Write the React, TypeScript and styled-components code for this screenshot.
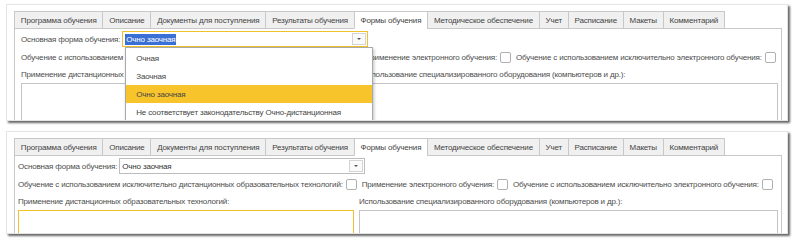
import React from 'react';
import styled, { createGlobalStyle } from 'styled-components';

const Global = createGlobalStyle`
  html, body { margin: 0; padding: 0; background: #ffffff; }
  body { font-family: Arial, "Liberation Sans", sans-serif; }
  * { box-sizing: border-box; }
`;

const Page = styled.div`
  width: 800px;
  height: 241px;
  overflow: hidden;
  display: flex;
  flex-direction: column;
  gap: 10px;
  padding: 4px 0 0 6px;
`;

const Card = styled.div<{ $h: number }>`
  width: 782px;
  height: ${(p) => p.$h}px;
  background: #fff;
  border: 1px solid #e4e4e4;
  box-shadow: 2px 2px 2px rgba(0, 0, 0, 0.6);
  padding: 6px 5px 0 7px;
  overflow: hidden;
  position: relative;
  font-size: 8px;
  letter-spacing: -0.17px;
  color: #4a4a4a;
`;

const TabBar = styled.div`
  display: flex;
  height: 18px;
  position: relative;
  z-index: 1;
`;

const Tab = styled.div<{ $active?: boolean }>`
  display: flex;
  align-items: center;
  padding: 0 5.8px;
  height: 18px;
  border: 1px solid #c8c8c8;
  border-right: none;
  background: ${(p) => (p.$active ? '#ffffff' : '#f0f0f0')};
  border-bottom-color: ${(p) => (p.$active ? '#ffffff' : '#c8c8c8')};
  color: #444;
  white-space: nowrap;
  &:last-child { border-right: 1px solid #c8c8c8; }
`;

const Pane = styled.div<{ $pad: number }>`
  margin-top: -1px;
  border: 1px solid #c8c8c8;
  padding: 1px 3px 0 ${(p) => p.$pad}px;
  height: 200px;
  display: flex;
  flex-direction: column;
`;

const Row = styled.div<{ $h: number }>`
  display: flex;
  align-items: center;
  height: ${(p) => p.$h}px;
  white-space: nowrap;
`;

const Label = styled.span`
  color: #4d4d4d;
`;

const ComboWrap = styled.div`
  position: relative;
  margin-left: 2px;
`;

const Combo = styled.div<{ $focus?: boolean }>`
  width: 246px;
  height: 16px;
  display: flex;
  border: 1px solid ${(p) => (p.$focus ? '#f0c12c' : '#bdbdbd')};
  background: #fff;
`;

const ComboText = styled.div`
  flex: 1;
  display: flex;
  align-items: center;
  padding-left: 2px;
  color: #333;
`;

const Selected = styled.span`
  background: #3a6fd6;
  color: #fff;
  padding: 1px 1px;
`;

const DropBtn = styled.div`
  width: 14px;
  border: 1px solid #d4d4d4;
  display: flex;
  align-items: center;
  justify-content: center;
  margin: 1px;
  background: #fafafa;
`;

const Arrow = styled.div`
  width: 0;
  height: 0;
  border-left: 2px solid transparent;
  border-right: 2px solid transparent;
  border-top: 2px solid #555;
`;

const Popup = styled.div`
  position: absolute;
  left: 3px;
  top: 16px;
  width: 248px;
  background: #fff;
  border: 1px solid #a9a9a9;
  box-shadow: 1px 2px 3px rgba(0, 0, 0, 0.25);
  padding-top: 1px;
  z-index: 5;
`;

const Item = styled.div<{ $hl?: boolean }>`
  height: 18px;
  display: flex;
  align-items: center;
  padding-left: 10px;
  background: ${(p) => (p.$hl ? '#f8c42c' : 'transparent')};
  color: #444;
  white-space: nowrap;
`;

const CheckItem = styled.div`
  display: flex;
  align-items: center;
  margin-right: 5px;
`;

const Check = styled.span`
  display: inline-block;
  width: 11px;
  height: 11px;
  border: 1px solid #b0b0b0;
  border-radius: 2px;
  background: #fff;
  margin-left: 3px;
`;

const Columns = styled.div`
  display: flex;
  gap: 5px;
  flex: 1;
`;

const Column = styled.div<{ $w?: number }>`
  display: flex;
  flex-direction: column;
  ${(p) => (p.$w ? `width: ${p.$w}px;` : 'flex: 1;')}
`;

const ColLabel = styled.div`
  height: 14px;
  display: flex;
  align-items: center;
  color: #4d4d4d;
  white-space: nowrap;
`;

const TextBox = styled.div<{ $focus?: boolean }>`
  margin-top: 2px;
  height: 60px;
  border: 1px solid ${(p) => (p.$focus ? '#f0c12c' : '#c4c4c4')};
  background: #fff;
`;

const tabs = [
  'Программа обучения',
  'Описание',
  'Документы для поступления',
  'Результаты обучения',
  'Формы обучения',
  'Методическое обеспечение',
  'Учет',
  'Расписание',
  'Макеты',
  'Комментарий',
];

const options = [
  'Очная',
  'Заочная',
  'Очно заочная',
  'Не соответствует законодательству Очно-дистанционная',
];

function Form({ open }: { open: boolean }) {
  return (
    <>
      <TabBar>
        {tabs.map((t) => (
          <Tab key={t} $active={t === 'Формы обучения'}>
            {t}
          </Tab>
        ))}
      </TabBar>
      <Pane $pad={open ? 6 : 3}>
        <Row $h={18}>
          <Label>Основная форма обучения:</Label>
          <ComboWrap>
            <Combo $focus={open}>
              <ComboText>
                {open ? <Selected>Очно заочная</Selected> : 'Очно заочная'}
              </ComboText>
              <DropBtn>
                <Arrow />
              </DropBtn>
            </Combo>
            {open && (
              <Popup>
                {options.map((o) => (
                  <Item key={o} $hl={o === 'Очно заочная'}>
                    {o}
                  </Item>
                ))}
              </Popup>
            )}
          </ComboWrap>
        </Row>
        <Row $h={19}>
          <CheckItem>
            <Label>Обучение с использованием исключительно дистанционных образовательных технологий:</Label>
            <Check />
          </CheckItem>
          <CheckItem>
            <Label>Применение электронного обучения:</Label>
            <Check />
          </CheckItem>
          <CheckItem>
            <Label>Обучение с использованием исключительно электронного обучения:</Label>
            <Check />
          </CheckItem>
        </Row>
        <Columns>
          <Column $w={336}>
            <ColLabel>Применение дистанционных образовательных технологий:</ColLabel>
            <TextBox $focus={!open} />
          </Column>
          <Column>
            <ColLabel>Использование специализированного оборудования (компьютеров и др.):</ColLabel>
            <TextBox />
          </Column>
        </Columns>
      </Pane>
    </>
  );
}

export default function App() {
  return (
    <>
      <Global />
      <Page>
        <Card $h={117}>
          <Form open />
        </Card>
        <Card $h={103}>
          <Form open={false} />
        </Card>
      </Page>
    </>
  );
}
